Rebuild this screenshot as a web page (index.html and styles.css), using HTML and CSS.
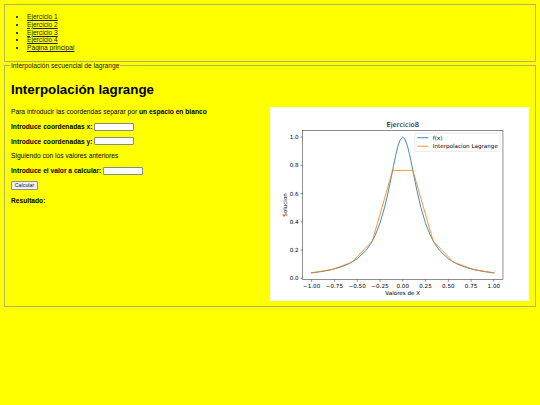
FILE: index.html
```html
<!DOCTYPE html>
<html lang="es">
<head>
<meta charset="utf-8">
<title>Interpolación lagrange</title>
<link rel="stylesheet" href="styles.css">
</head>
<body>
<nav class="menu">
  <ul>
    <li><a href="#">Ejercicio 1</a></li>
    <li><a href="#">Ejercicio 2</a></li>
    <li><a href="#">Ejercicio 3</a></li>
    <li><a href="#">Ejercicio 4</a></li>
    <li><a href="#">Página principal</a></li>
  </ul>
</nav>
<fieldset class="panel">
  <legend>Interpolación secuencial de lagrange</legend>
  <h1>Interpolación lagrange</h1>
  <div class="cols">
    <form class="form">
      <p class="row">Para introducir las coordendas separar por <b>un espacio en blanco</b></p>
      <p class="row"><b>Introduce coordenadas x:</b> <input class="field" type="text"></p>
      <p class="row"><b>Introduce coordenadas y:</b> <input class="field" type="text"></p>
      <p class="row">Siguiendo con los valores anteriores</p>
      <p class="row"><b>Introduce el valor a calcular:</b> <input class="field" type="text"></p>
      <p class="row btnrow"><button class="btn" type="button">Calcular</button></p>
      <p class="row"><b>Resultado:</b></p>
    </form>
    <div class="chart">
      <svg class="plot" viewBox="0 0 640 480" width="259" height="194">
        <rect x="0" y="0" width="640" height="480" fill="#fff"/>
        <g fill="none" stroke-linejoin="round" stroke-linecap="square">
          <polyline stroke="#1f77b4" stroke-width="2.1" points="102.55,410.40 125.09,407.40 147.64,403.29 170.18,397.47 192.73,388.90 215.27,375.64 237.82,353.95 249.09,337.82 260.36,316.32 271.64,287.47 282.91,249.12 288.55,225.93 294.18,200.20 299.82,172.56 305.45,144.29 311.09,117.48 316.73,94.95 322.36,79.77 328,74.40 333.64,79.77 339.27,94.95 344.91,117.48 350.55,144.29 356.18,172.56 361.82,200.20 367.45,225.93 373.09,249.12 384.36,287.47 395.64,316.32 406.91,337.82 418.18,353.95 440.73,375.64 463.27,388.90 485.82,397.47 508.36,403.29 530.91,407.40 553.45,410.40"/>
          <polyline stroke="#ff7f0e" stroke-width="2.1" points="102.55,410.40 152.65,402.17 202.75,383.75 252.85,331.34 302.95,156.81 353.05,156.81 403.15,331.34 453.25,383.75 503.35,402.17 553.45,410.40"/>
        </g>
        <rect x="80" y="57.6" width="496" height="369.6" fill="none" stroke="#000" stroke-width="1.1"/>
        <g stroke="#000" stroke-width="1.1">
          <line x1="102.55" y1="427.2" x2="102.55" y2="432.1"/>
          <line x1="158.91" y1="427.2" x2="158.91" y2="432.1"/>
          <line x1="215.27" y1="427.2" x2="215.27" y2="432.1"/>
          <line x1="271.64" y1="427.2" x2="271.64" y2="432.1"/>
          <line x1="328" y1="427.2" x2="328" y2="432.1"/>
          <line x1="384.36" y1="427.2" x2="384.36" y2="432.1"/>
          <line x1="440.73" y1="427.2" x2="440.73" y2="432.1"/>
          <line x1="497.09" y1="427.2" x2="497.09" y2="432.1"/>
          <line x1="553.45" y1="427.2" x2="553.45" y2="432.1"/>
          <line x1="75.1" y1="423.84" x2="80" y2="423.84"/>
          <line x1="75.1" y1="353.95" x2="80" y2="353.95"/>
          <line x1="75.1" y1="284.06" x2="80" y2="284.06"/>
          <line x1="75.1" y1="214.17" x2="80" y2="214.17"/>
          <line x1="75.1" y1="144.29" x2="80" y2="144.29"/>
          <line x1="75.1" y1="74.40" x2="80" y2="74.40"/>
        </g>
        <g class="tick" text-anchor="middle">
          <text x="102.55" y="447">−1.00</text>
          <text x="158.91" y="447">−0.75</text>
          <text x="215.27" y="447">−0.50</text>
          <text x="271.64" y="447">−0.25</text>
          <text x="328" y="447">0.00</text>
          <text x="384.36" y="447">0.25</text>
          <text x="440.73" y="447">0.50</text>
          <text x="497.09" y="447">0.75</text>
          <text x="553.45" y="447">1.00</text>
        </g>
        <g class="tick" text-anchor="end">
          <text x="70.3" y="428.8">0.0</text>
          <text x="70.3" y="358.9">0.2</text>
          <text x="70.3" y="289">0.4</text>
          <text x="70.3" y="219.1">0.6</text>
          <text x="70.3" y="149.3">0.8</text>
          <text x="70.3" y="79.4">1.0</text>
        </g>
        <text class="tick" x="328" y="466" text-anchor="middle">Valores de X</text>
        <text class="tick" x="0" y="0" text-anchor="middle" transform="translate(41 242.4) rotate(-90)">Solucion</text>
        <text class="title" x="328" y="50" text-anchor="middle">Ejercicio8</text>
        <rect x="358" y="64.5" width="211" height="45" rx="3" fill="#fff" fill-opacity="0.8" stroke="#ccc" stroke-width="1.1"/>
        <line x1="364" y1="76" x2="391.5" y2="76" stroke="#1f77b4" stroke-width="2.1"/>
        <line x1="364" y1="97" x2="391.5" y2="97" stroke="#ff7f0e" stroke-width="2.1"/>
        <text class="tick" x="402.5" y="81">f(x)</text>
        <text class="tick" x="402.5" y="102">Interpolacion Lagrange</text>
      </svg>
    </div>
  </div>
</fieldset>
</body>
</html>
```
FILE: styles.css
```css
html, body {
  background: #ffff00;
}
body {
  margin: 4px;
  font-family: "Liberation Sans", Arial, sans-serif;
  font-size: 6.67px;
  line-height: 7.67px;
  color: #000;
}
.menu {
  border: 1px solid #b4b45a;
  padding-top: 8px;
  box-sizing: border-box;
  height: 58px;
}
.menu ul {
  margin: 0;
  padding-left: 22px;
}
.menu li {
  line-height: 7.75px;
}
.menu a {
  color: #222;
}
.panel {
  margin: 0;
  border: 1px solid #b4b45a;
  padding: 2px 6px 5px;
}
.panel legend {
  padding: 0 1px;
  margin-left: -1px;
  color: #111;
}
h1 {
  font-size: 13.33px;
  line-height: 15.33px;
  margin: 10px 0 10px;
  font-weight: bold;
}
.cols {
  display: grid;
  grid-template-columns: 259px 259px;
}
.form {
  display: flex;
  flex-direction: column;
  gap: 6.7px;
  padding-top: 1px;
}
.row {
  margin: 0;
  height: 8px;
  display: flex;
  align-items: center;
  white-space: pre;
}
.btnrow {
  height: 9px;
}
.field {
  width: 40px;
  height: 8px;
  box-sizing: border-box;
  border: 1px solid #8a8a8a;
  border-radius: 1px;
  background: #fff;
  padding: 0;
  margin: 0 0 0 1.5px;
  font-size: 6px;
}
.btn {
  height: 9px;
  width: 27px;
  box-sizing: border-box;
  padding: 0;
  font-family: "Liberation Sans", Arial, sans-serif;
  font-size: 5.3px;
  line-height: 7px;
  color: #222;
  background: #efefef;
  border: 1px solid #8f8f8f;
  border-radius: 1px;
}
.chart {
  display: flex;
}
.plot {
  display: block;
}
.plot .tick {
  font-family: "DejaVu Sans", sans-serif;
  font-size: 13.9px;
  fill: #000;
}
.plot .title {
  font-family: "DejaVu Sans", sans-serif;
  font-size: 16.7px;
  fill: #000;
}
```
